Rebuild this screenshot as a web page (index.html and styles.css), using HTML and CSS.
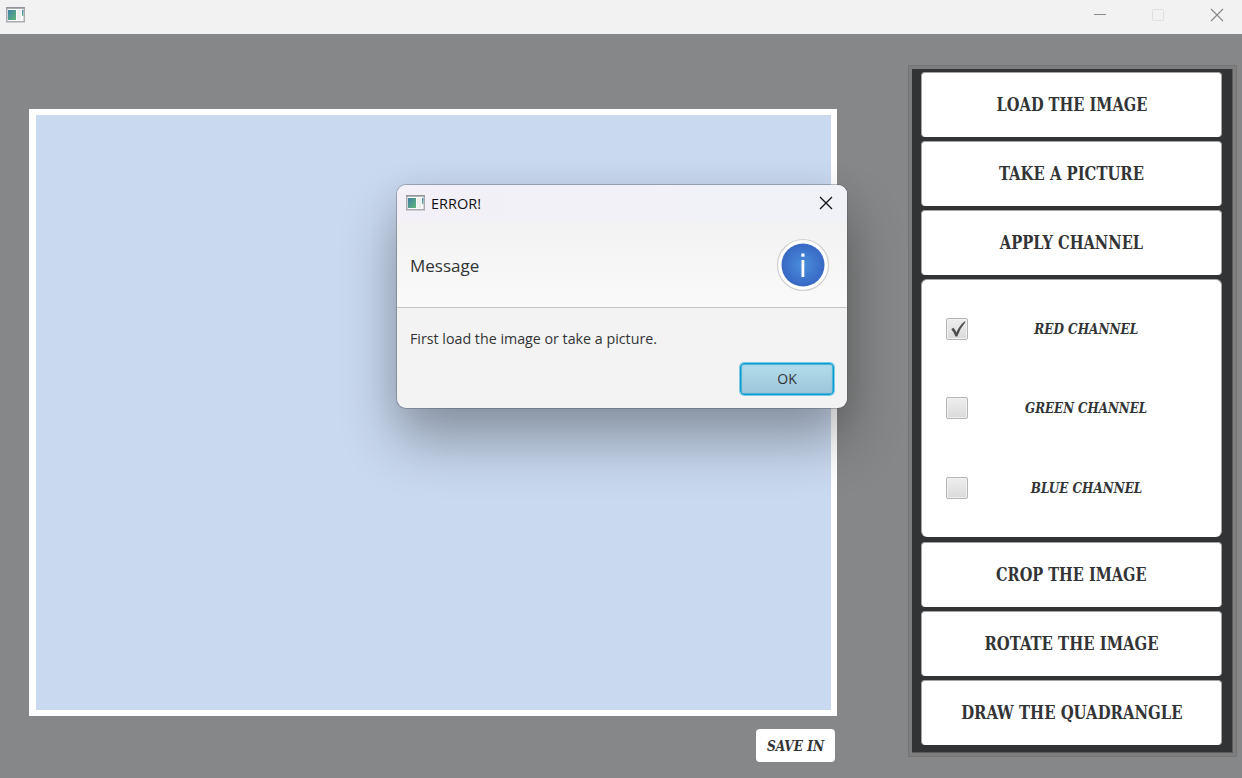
FILE: index.html
```html
<!DOCTYPE html>
<html lang="en">
<head>
<meta charset="utf-8">
<title>Image editor</title>
<link rel="stylesheet" href="styles.css">
</head>
<body>
<svg width="0" height="0" class="defs">
  <defs>
    <linearGradient id="thumb" x1="0" y1="0" x2="1" y2="1"><stop offset="0" stop-color="#3f7fa6"/><stop offset="1" stop-color="#5fb878"/></linearGradient>
    <linearGradient id="thumb2" x1="0" y1="0" x2="0" y2="1"><stop offset="0" stop-color="#4178b4"/><stop offset="1" stop-color="#62b58c"/></linearGradient>
    <radialGradient id="blue"><stop offset="0" stop-color="#4a8fdc"/><stop offset="1" stop-color="#3868c4"/></radialGradient>
    <symbol id="app" viewBox="0 0 19 16">
      <rect x=".75" y=".75" width="17.5" height="14" fill="#fbfbfc" stroke="#a9abb0" stroke-width="1.5"/>
      <path d="M0 .8H19" stroke="#92959c" stroke-width="1.6"/>
      <rect x="2" y="3" width="8" height="10" fill="url(#thumb)"/>
      <rect x="11" y="3" width="4" height="10" fill="#eeeeef"/>
      <rect x="16" y="3" width="1.3" height="6" fill="url(#thumb2)"/>
    </symbol>
  </defs>
</svg>
<div class="window">
  <header class="titlebar">
    <svg class="app-icon"><use href="#app"/></svg>
    <div class="controls">
      <svg viewBox="0 0 12 12"><path d="M0 5.5H12" stroke="#8c8c8c"/></svg>
      <svg viewBox="0 0 12 12"><rect x=".5" y=".5" width="11" height="11" rx="1" stroke="#e0e0e0" fill="none"/></svg>
      <svg viewBox="0 0 12 12"><path d="M0 0L12 12M12 0L0 12" stroke="#858585" stroke-width="1.1"/></svg>
    </div>
  </header>
  <main class="content">
    <section class="left">
      <div class="canvas"></div>
      <button class="save"><span>SAVE IN</span></button>
    </section>
    <aside class="panel">
      <div class="stack">
        <button class="action"><span class="t-load">LOAD THE IMAGE</span></button>
        <button class="action"><span class="t-take">TAKE A PICTURE</span></button>
        <button class="action"><span class="t-apply">APPLY CHANNEL</span></button>
        <div class="channels">
          <div class="row"><i class="check"><svg viewBox="0 0 15 16"><path d="M.3 8.2L2.3 6.8Q4.2 8.600 5.300 11.500Q8.500 4.500 13.800.3L14.600.8Q9.300 7 6.300 15.500H4.500Q3 11 .3 8.200Z" fill="#4d4d4d"/></svg></i><span class="t-red">RED CHANNEL</span></div>
          <div class="row"><i class="check"></i><span class="t-green">GREEN CHANNEL</span></div>
          <div class="row"><i class="check"></i><span class="t-blue">BLUE CHANNEL</span></div>
        </div>
        <button class="action"><span class="t-crop">CROP THE IMAGE</span></button>
        <button class="action"><span class="t-rotate">ROTATE THE IMAGE</span></button>
        <button class="action"><span class="t-draw">DRAW THE QUADRANGLE</span></button>
      </div>
    </aside>
  </main>
</div>
<div class="dialog">
  <div class="dialog-bar">
    <svg class="app-icon"><use href="#app"/></svg>
    <span class="dialog-title">ERROR!</span>
    <svg class="dialog-close" viewBox="0 0 12 12"><path d="M0 0L12 12M12 0L0 12" stroke="#111" stroke-width="1.25"/></svg>
  </div>
  <div class="dialog-head">
    <span class="heading">Message</span>
    <svg class="info" viewBox="0 0 54 54">
      <circle cx="27" cy="27" r="25.500" fill="#fff" stroke="#cfcfcf" stroke-width="1.200"/>
      <circle cx="27" cy="27" r="21.500" fill="url(#blue)"/>
      <rect x="25.300" y="15.500" width="3.200" height="3.200" fill="#fff"/>
      <rect x="25.500" y="22" width="2.800" height="17" fill="#fff"/>
    </svg>
  </div>
  <div class="dialog-body">
    <p>First load the image or take a picture.</p>
    <button class="ok">OK</button>
  </div>
</div>
</body>
</html>
```

FILE: styles.css
```css
* { box-sizing: border-box; }
body { margin: 0; width: 1242px; height: 778px; overflow: hidden; font-family: "Open Sans", "Noto Sans", sans-serif; color: #323436; }
button { border: 0; padding: 0; margin: 0; color: inherit; }
svg { display: block; }
.defs { position: absolute; }
.window { display: flex; flex-direction: column; height: 778px; background: #868788; }
.titlebar { height: 34px; flex: none; background: #f2f2f2; display: flex; justify-content: space-between; padding: 7px 19px 0 6px; }
.app-icon { width: 19px; height: 16px; flex: none; }
.controls { display: flex; gap: 47px; padding-top: 2px; }
.controls svg { width: 12px; height: 12px; overflow: visible; }
.controls svg:first-child { margin-right: -1px; }
.content { flex: 1; display: flex; justify-content: space-between; padding: 31px 5px 0 29px; }
.left { width: 808px; padding-top: 44px; display: flex; flex-direction: column; align-items: flex-end; }
.canvas { width: 808px; height: 607px; border: 6px solid #fff; border-left-width: 7px; background: #c9d9ef; }
.save { width: 79px; height: 33px; margin: 13px 2px 0 0; border-radius: 4px; background: #fff; }
.panel { width: 329px; height: 692px; border: 1px solid #747474; background: #7e7e7e; padding: 3px; }
.stack { height: 684px; background: #323335; border-right: 1px solid #5b5b5b; border-bottom: 1px solid #5b5b5b; padding: 3px 10px 0 9px; display: flex; flex-direction: column; gap: 4px; }
.action, .channels { border-radius: 4px; background: #fff; border: 1px solid #a3a3a3; border-bottom: 0; flex: none; }
.action { height: 65px; padding-bottom: 1px; }
.channels { height: 258px; margin-bottom: 1px; border-radius: 6px; padding: 9px 0 9px 24px; display: grid; grid-template-rows: 79px 79px 81px; }
.row { display: grid; grid-template-columns: 22px 1fr; align-items: center; }
.row span { justify-self: center; margin-left: -16px; }
.action span, .row span, .save span { display: block; width: max-content; font-family: "DejaVu Serif Condensed", "DejaVu Serif", serif; font-stretch: condensed; font-weight: bold; white-space: nowrap; }
.action span { margin: 0 auto; font-size: 18.500px; line-height: 22px; }
.row span, .save span { font-size: 14.500px; line-height: 18px; font-style: italic; }
.save { display: flex; align-items: center; justify-content: center; }
.save span { transform: scaleX(.935); }
.t-load { transform: scaleX(.877); }
.t-take { transform: scaleX(.89); }
.t-apply { transform: scaleX(.88); }
.t-crop { transform: scaleX(.872); }
.t-rotate { transform: scaleX(.893); }
.t-draw { transform: scaleX(.894); }
.t-red { transform: scaleX(.925); }
.t-green { transform: scaleX(.91); }
.t-blue { transform: scaleX(.92); }
.check { width: 22px; height: 22px; border: 1px solid #b5b5b5; border-radius: 2px; background: linear-gradient(#eee, #dadada); box-shadow: inset 0 0 0 1px #f1f1f1; }
.check svg { width: 15px; height: 16px; margin: 2px 0 0 4px; }
.dialog { position: absolute; left: 397px; top: 185px; width: 450px; height: 223px; border-radius: 9px; background: #f3f3f3; box-shadow: 0 0 0 1px rgba(80,85,95,.38), 0 32px 56px rgba(0,0,0,.32), 0 4px 36px rgba(0,0,0,.06); overflow: hidden; }
.dialog-bar { height: 37px; background: linear-gradient(90deg, #f3f0f7, #f0f2f8); display: flex; align-items: center; padding: 0 15px 2px 9px; }
.dialog-title { font-size: 14.500px; margin: 1px 0 0 6px; color: #111; }
.dialog-close { width: 12px; height: 12px; margin-left: auto; overflow: visible; }
.dialog-head { height: 86px; border-bottom: 1px solid #c3c3c3; background: linear-gradient(#f2f2f2, #fafafa); display: flex; align-items: center; justify-content: space-between; padding: 0 17px 0 13px; }
.heading { font-size: 17px; margin-top: 1px; }
.info { width: 54px; height: 54px; }
.dialog-body { padding: 20px 13px 0; display: flex; flex-direction: column; }
.dialog-body p { margin: 0; font-size: 14.250px; line-height: 22px; white-space: nowrap; }
.ok { width: 94px; height: 32px; margin-top: 13px; align-self: flex-end; border: 1px solid #039ed3; border-radius: 4px; background: linear-gradient(#b3dcec, #9dc5da); box-shadow: 0 0 0 1px #7fcbe6, inset 0 0 0 .5px #039ed3, inset 0 0 3px #8bb5c8; font: 14px "Open Sans", sans-serif; padding-bottom: 2px; }
```
